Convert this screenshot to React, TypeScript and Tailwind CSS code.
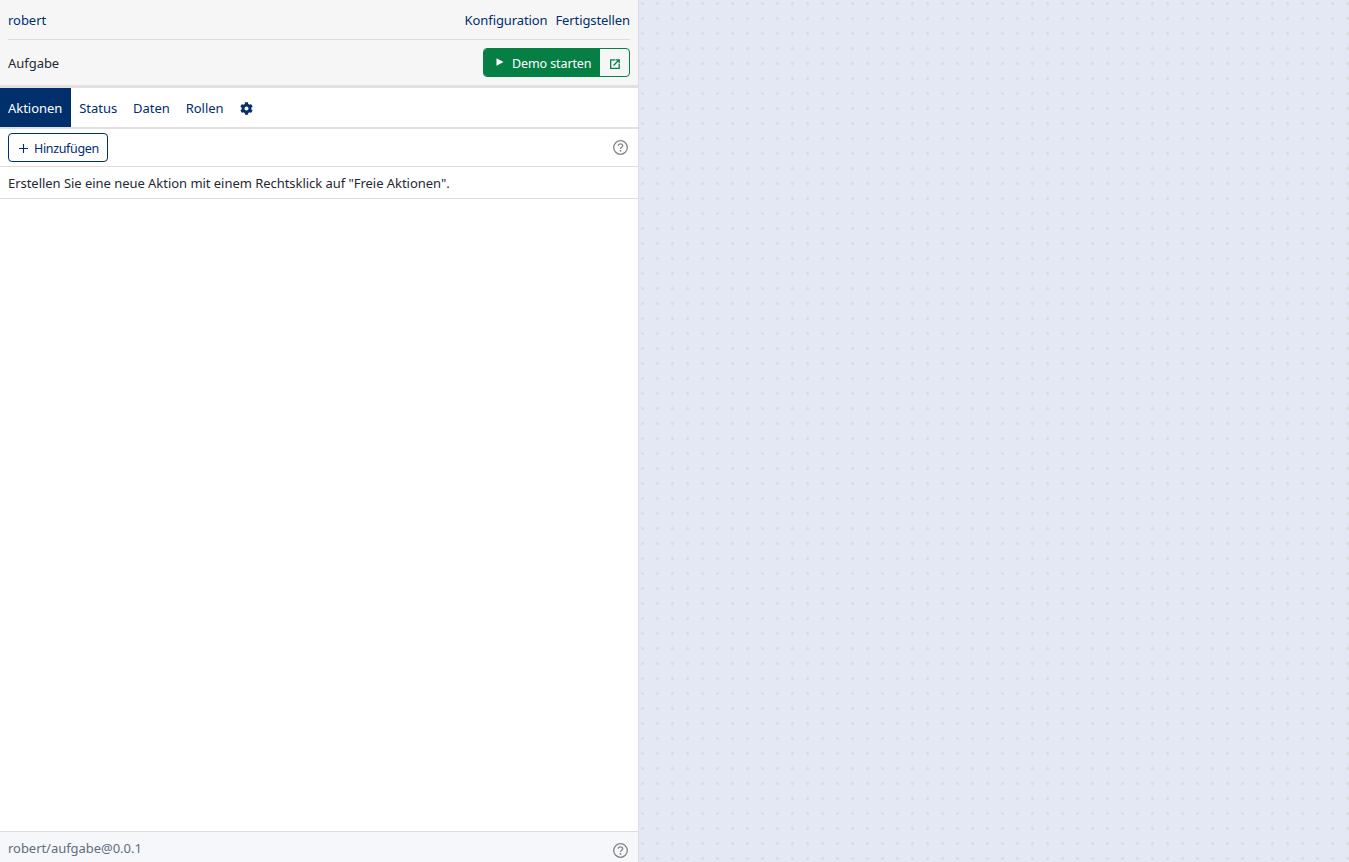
import React from "react";

const Help = () => (
  <svg width="15" height="15" viewBox="0 0 15 15" fill="none" className="text-[#858585]">
    <circle cx="7.5" cy="7.5" r="6.8" stroke="currentColor" strokeWidth="1.3" />
    <path d="M5.3 5.8C5.3 4.6 6.3 3.8 7.5 3.8s2.2.8 2.2 1.9c0 1.6-2.2 1.6-2.2 3.2" stroke="currentColor" strokeWidth="1.3" />
    <rect x="6.7" y="10" width="1.6" height="1.6" fill="currentColor" />
  </svg>
);

export default function App() {
  return (
    <div className="flex h-[862px] w-full overflow-hidden text-[13px] tracking-[-0.04px] font-['Noto_Sans',sans-serif] bg-[#e4e8f4] bg-[radial-gradient(circle,#d9dce0_1.2px,transparent_1.8px)] bg-[length:15px_15px] bg-[position:5px_-4px]">
      <div className="flex w-[639px] shrink-0 flex-col bg-white border-r border-[#dcdee6]">
        <header className="h-[88px] shrink-0 bg-[#f6f6f6] border-b-[3px] border-[#e0e0e0] px-2">
          <div className="flex h-10 items-center justify-between border-b border-[#dddddd] pt-[2px]">
            <a className="text-[#002f6c]">robert</a>
            <div className="flex gap-2 text-[#002f6c] tracking-[-0.1px]">
              <a>Konfiguration</a>
              <a>Fertigstellen</a>
            </div>
          </div>
          <div className="flex h-[45px] items-center justify-between">
            <span className="pt-[2px] text-[#1f2933]">Aufgabe</span>
            <div className="flex h-[29px] w-[147px] overflow-hidden rounded border border-[#067f45]">
              <button className="flex flex-1 items-center whitespace-nowrap bg-[#067f45] pl-3 text-[12.5px] tracking-[-0.1px] text-white">
                <svg width="8" height="8" viewBox="0 0 8 8" className="mr-[8px] -mt-[1px]">
                  <path d="M0.5 0.2L7.5 4L0.5 7.8Z" fill="currentColor" />
                </svg>
                <span className="pt-[3px]">Demo starten</span>
              </button>
              <button className="flex w-[29px] items-center justify-center pl-px pt-[2px] text-[#067f45]">
                <svg width="10" height="10" viewBox="0 0 10 10" fill="none" stroke="currentColor" strokeWidth="1.3">
                  <path d="M5.5 0.8H0.7v8.5h8.5V4.5" />
                  <path d="M3.5 6.5L9.2 0.8M6 0.8H9.2V4" />
                </svg>
              </button>
            </div>
          </div>
        </header>
        <nav className="flex h-[41px] shrink-0 border-b-2 border-[#e0e0e0] text-[#002f6c]">
          <a className="flex h-[39px] items-center bg-[#002f6c] pl-2 pr-[9px] pt-[2px] text-white">Aktionen</a>
          <a className="flex h-[39px] items-center px-2 pt-[2px]">Status</a>
          <a className="flex h-[39px] items-center px-2 pt-[2px]">Daten</a>
          <a className="flex h-[39px] items-center px-2 pt-[2px]">Rollen</a>
          <a className="flex h-[39px] items-center px-2 pt-[2px]">
            <svg width="13" height="13" viewBox="0 0 512 512" fill="currentColor">
              <path d="M487.4 315.7l-42.6-24.6c4.3-23.2 4.3-47 0-70.2l42.6-24.6c4.9-2.8 7.1-8.6 5.5-14-11.1-35.6-30-67.8-54.7-94.6-3.8-4.1-10-5.1-14.8-2.3L380.8 110c-17.9-15.4-38.5-27.3-60.8-35.1V25.8c0-5.6-3.9-10.5-9.4-11.7-36.7-8.2-74.3-7.8-109.2 0-5.5 1.2-9.4 6.1-9.4 11.7V75c-22.2 7.9-42.8 19.8-60.8 35.1L88.7 85.5c-4.9-2.8-11-1.9-14.8 2.3-24.7 26.7-43.6 58.9-54.7 94.6-1.7 5.4.6 11.2 5.5 14L67.3 221c-4.3 23.2-4.3 47 0 70.2l-42.6 24.6c-4.9 2.8-7.1 8.6-5.5 14 11.1 35.6 30 67.8 54.7 94.6 3.8 4.1 10 5.1 14.8 2.3l42.6-24.6c17.9 15.4 38.5 27.3 60.8 35.1v49.2c0 5.6 3.9 10.5 9.4 11.7 36.7 8.2 74.3 7.8 109.2 0 5.5-1.2 9.4-6.1 9.4-11.7v-49.2c22.2-7.9 42.8-19.8 60.8-35.1l42.6 24.6c4.9 2.8 11 1.9 14.8-2.3 24.7-26.7 43.6-58.9 54.7-94.6 1.5-5.5-.7-11.3-5.6-14.1zM256 336c-44.1 0-80-35.9-80-80s35.9-80 80-80 80 35.9 80 80-35.9 80-80 80z" />
            </svg>
          </a>
        </nav>
        <div className="flex h-[38px] shrink-0 items-center justify-between border-b border-[#dddddd] pl-2 pr-[10px]">
          <button className="flex h-[29px] w-[100px] items-center whitespace-nowrap rounded border border-[#002f6c] pl-[10px] text-[12.5px] tracking-[-0.35px] text-[#002f6c]">
            <svg width="9" height="9" viewBox="0 0 9 9" stroke="currentColor" strokeWidth="1.1" className="mr-[6px] mt-[1px]">
              <path d="M4.5 0v9M0 4.5h9" />
            </svg>
            <span className="pt-[3px]">Hinzufügen</span>
          </button>
          <Help />
        </div>
        <div className="flex h-8 shrink-0 items-center border-b border-[#dddddd] px-2 pt-[2px] text-[#1f2933]">
          Erstellen Sie eine neue Aktion mit einem Rechtsklick auf "Freie Aktionen".
        </div>
        <div className="flex-1" />
        <footer className="flex h-[31px] shrink-0 items-center justify-between border-t border-[#dddddd] bg-[#f5f7fa] pl-2 pr-[10px] text-[#616e7c]">
          <span className="pt-[3px]">robert/aufgabe@0.0.1</span>
          <span className="mt-[6px] flex">
            <Help />
          </span>
        </footer>
      </div>
    </div>
  );
}
